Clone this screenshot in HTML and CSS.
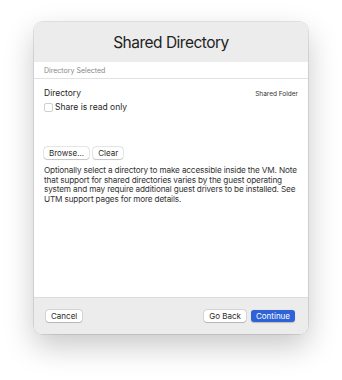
FILE: index.html
```html
<!DOCTYPE html>
<html lang="en">
<head>
  <meta charset="UTF-8" />
  <meta name="viewport" content="width=device-width, initial-scale=1.0" />
  <title>Shared Directory</title>
  <link rel="stylesheet" href="styles.css">
</head>
<body>
  <div class="window">
    <div class="titlebar">Shared Directory</div>
    <div class="section-head">Directory Selected</div>
    <div class="content">
      <div class="row">
        <span class="label">Directory</span>
        <span class="value">Shared Folder</span>
      </div>
      <label class="check">
        <span class="box"></span>
        Share is read only
      </label>
      <div class="actions">
        <button class="btn">Browse...</button>
        <button class="btn">Clear</button>
      </div>
      <p class="note">Optionally select a directory to make accessible inside the VM. Note that support for shared directories varies by the guest operating system and may require additional guest drivers to be installed. See UTM support pages for more details.</p>
    </div>
    <div class="footer">
      <button class="btn">Cancel</button>
      <div class="right">
        <button class="btn">Go Back</button>
        <button class="btn primary">Continue</button>
      </div>
    </div>
  </div>
</body>
</html>
```

FILE: styles.css
```css
* {
  margin: 0;
  padding: 0;
  box-sizing: border-box;
}
body {
  font-family: Inter, 'Liberation Sans', sans-serif;
  background: #fff;
  width: 342px;
  height: 380px;
  padding: 22px 34px 0;
}
.window {
  height: 312px;
  border-radius: 8px;
  overflow: hidden;
  background: #fff;
  display: flex;
  flex-direction: column;
  box-shadow: 0 0 0 0.5px rgba(0,0,0,0.18), 0 12px 30px rgba(0,0,0,0.22);
}
.titlebar {
  height: 40px;
  background: #ececec;
  display: flex;
  align-items: center;
  justify-content: center;
  font-size: 15.5px;
  color: #222;
  letter-spacing: -0.5px;
}
.section-head {
  height: 17px;
  padding-left: 10px;
  display: flex;
  align-items: center;
  font-size: 7px;
  color: #888;
  border-bottom: 1px solid #e2e2e2;
}
.content {
  flex: 1;
  padding: 9px 10px 0;
}
.row {
  display: flex;
  justify-content: space-between;
  align-items: baseline;
}
.label {
  font-size: 8.5px;
  color: #262626;
}
.value {
  font-size: 6.5px;
  color: #333;
}
.check {
  display: flex;
  align-items: center;
  gap: 2px;
  margin-top: 4px;
  font-size: 8.5px;
  color: #262626;
}
.box {
  width: 9px;
  height: 9px;
  border: 1px solid #cfcfcf;
  border-radius: 2px;
  background: #fff;
}
.actions {
  display: flex;
  gap: 4px;
  margin-top: 35px;
}
.btn {
  font-family: inherit;
  font-size: 8px;
  color: #2a2a2a;
  background: #fff;
  border: none;
  border-radius: 3px;
  height: 12px;
  padding: 0 5px;
  box-shadow: 0 0 0 0.5px rgba(0,0,0,0.18), 0 0.5px 1px rgba(0,0,0,0.15);
}
.note {
  margin-top: 7px;
  font-size: 8.2px;
  line-height: 9.7px;
  letter-spacing: -0.15px;
  color: #333;
}
.footer {
  height: 37px;
  background: #ececec;
  border-top: 1px solid #dcdcdc;
  display: flex;
  align-items: center;
  justify-content: space-between;
  padding: 0 13px 0 12px;
}
.right {
  display: flex;
  gap: 5px;
}
.primary {
  background: #2f62d6;
  color: #fff;
  box-shadow: 0 0.5px 1px rgba(0,0,0,0.2);
}
```
